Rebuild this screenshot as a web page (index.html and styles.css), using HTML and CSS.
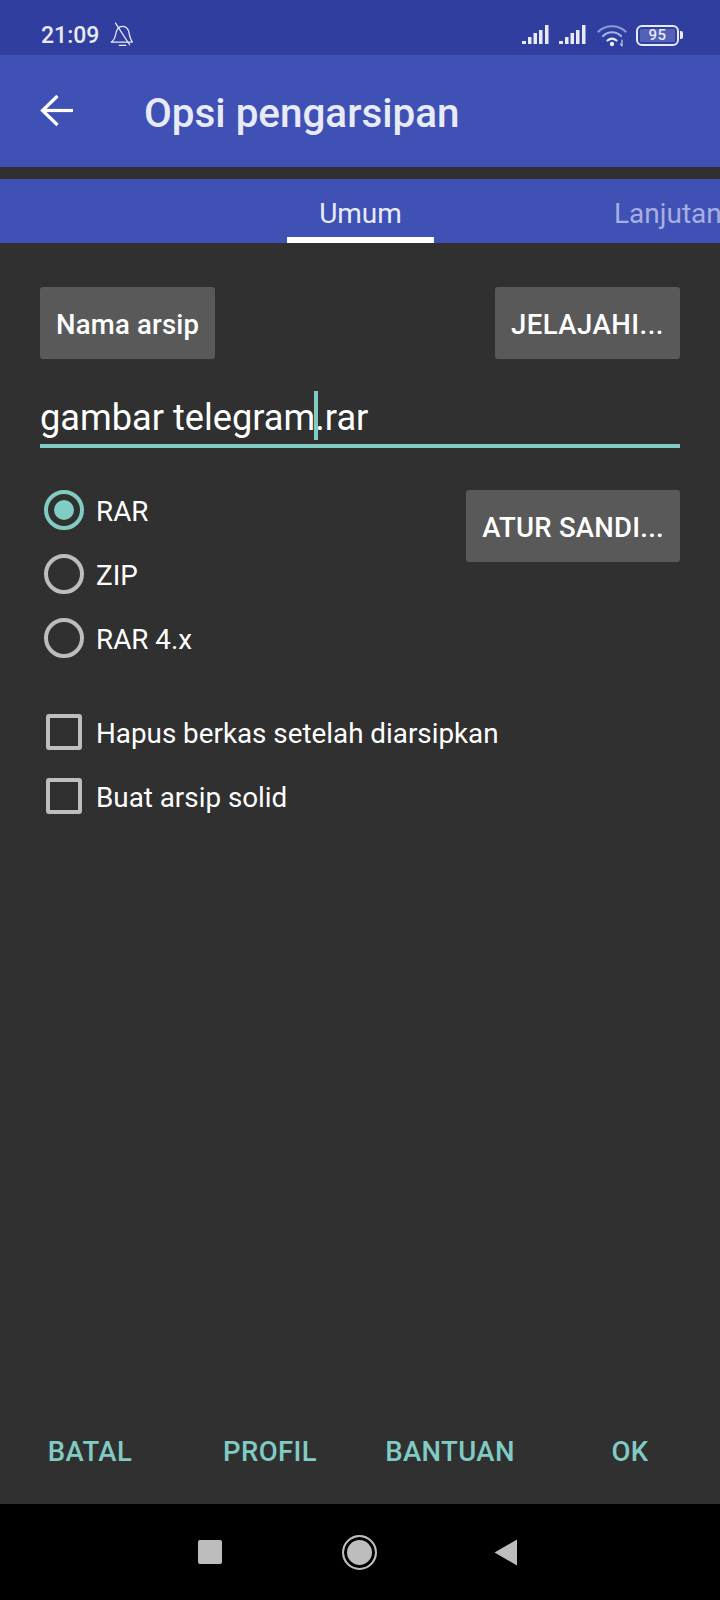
FILE: index.html
```html
<!DOCTYPE html>
<html lang="id">
<head>
<meta charset="utf-8">
<title>Opsi pengarsipan</title>
<link rel="stylesheet" href="styles.css">
</head>
<body>
<div class="screen">
  <div class="status">
    <span class="time">21:09</span>
    <svg class="bell" width="26" height="26" viewBox="0 0 24 24" fill="none" stroke="#e8eaf6" stroke-width="1.200" stroke-linejoin="round" stroke-linecap="round">
      <path d="M2 18.500c2.500-1.500 3.500-3.500 4-6.500.6-4 2.500-8 6.500-8 2.500 0 4.500 1.500 5.500 4 .8 2.500.6 6 3.500 10.500z"/>
      <path d="M9.500 21.500h6"/>
      <path d="M6 1l13 20"/>
    </svg>
    <span class="status-space"></span>
    <svg class="signal" width="28" height="22" viewBox="0 0 28 22" fill="#e8eaf6">
      <rect x="0" y="17" width="4" height="3"/><rect x="6" y="13" width="3.500" height="7"/><rect x="11.500" y="9" width="3.500" height="11"/><rect x="17" y="6" width="3.500" height="14"/><rect x="23" y="1" width="3.500" height="19"/>
    </svg>
    <svg class="signal" width="28" height="22" viewBox="0 0 28 22" fill="#e8eaf6">
      <rect x="0" y="17" width="4" height="3"/><rect x="6" y="13" width="3.500" height="7"/><rect x="11.500" y="9" width="3.500" height="11"/><rect x="17" y="6" width="3.500" height="14"/><rect x="23" y="1" width="3.500" height="19"/>
    </svg>
    <svg class="wifi" width="30" height="24" viewBox="0 0 30 24" fill="none" stroke-linecap="round">
      <path d="M1.500 8.500C9 1.500 21 1.500 28.500 8.500" stroke="#8f9ad6" stroke-width="2.200"/>
      <path d="M6 13c5.500-5 12.500-5 18 0" stroke="#a9b2e2" stroke-width="2.200"/>
      <path d="M10.500 17.500c3-2.500 6-2.500 9 0" stroke="#e8eaf6" stroke-width="2.200"/>
      <circle cx="15" cy="21" r="2.200" fill="#e8eaf6"/>
      <path d="M25 17v6M23.500 21l1.500 2" stroke="#c5cae9" stroke-width="1.200"/>
    </svg>
    <span class="battery"><span class="battery-level">95</span></span>
    <span class="battery-tip"></span>
  </div>

  <header class="toolbar">
    <svg class="back" width="34" height="34" viewBox="0 0 34 34" fill="none" stroke="#fff" stroke-width="3.200">
      <path d="M33 16.500H3"/><path d="M17.500 2L2.500 16.500 17.500 31"/>
    </svg>
    <h1 class="title">Opsi pengarsipan</h1>
  </header>

  <nav class="tabs">
    <div class="tab tab-active">Umum</div>
    <div class="tab tab-next">Lanjutan</div>
  </nav>

  <main class="content">
    <div class="row-between">
      <div class="btn btn-name">Nama arsip</div>
      <div class="btn btn-browse">JELAJAHI...</div>
    </div>
    <div class="field"><span class="field-text">gambar telegram<span class="caret"></span>.rar</span></div>

    <div class="format">
      <div class="radios">
        <div class="option"><span class="radio radio-on"></span><span class="label">RAR</span></div>
        <div class="option"><span class="radio"></span><span class="label">ZIP</span></div>
        <div class="option"><span class="radio"></span><span class="label">RAR 4.x</span></div>
      </div>
      <div class="btn btn-pass">ATUR SANDI...</div>
    </div>

    <div class="checks">
      <div class="option"><span class="check"></span><span class="label">Hapus berkas setelah diarsipkan</span></div>
      <div class="option"><span class="check"></span><span class="label">Buat arsip solid</span></div>
    </div>
  </main>

  <footer class="actions">
    <div class="action">BATAL</div>
    <div class="action">PROFIL</div>
    <div class="action">BANTUAN</div>
    <div class="action">OK</div>
  </footer>

  <div class="navbar">
    <span class="nav-square"></span>
    <span class="nav-home"></span>
    <svg class="nav-back" width="24" height="27" viewBox="0 0 24 27" fill="#bdbdbd"><path d="M23 .5V26.500L.5 13.500z"/></svg>
  </div>
</div>
</body>
</html>
```

FILE: styles.css
```css
* { box-sizing: border-box; }
html, body { margin: 0; padding: 0; }
body { background: #303030; font-family: Roboto, "Liberation Sans", sans-serif; }

.screen { width: 720px; height: 1600px; display: flex; flex-direction: column; overflow: hidden; background: #303030; color: #fff; }

.status { height: 55px; flex: none; background: #303f9f; display: flex; align-items: center; padding: 15px 0 0 41px; color: #e8eaf6; }
.time { font-size: 23px; font-weight: 500; }
.bell { margin-left: 10px; }
.status-space { flex: 1; }
.signal { margin-right: 9px; }
.wifi { margin-left: 1px; margin-right: 9px; }
.battery { width: 43px; height: 21px; border: 2.500px solid #e8eaf6; border-radius: 6px; padding: 2px; display: flex; }
.battery-level { flex: 1; background: #5361b8; color: #e8eaf6; font-size: 15px; font-weight: 500; line-height: 13px; text-align: center; border-radius: 1px; letter-spacing: .5px; }
.battery-tip { width: 3px; height: 8px; background: #e8eaf6; margin: 0 37px 0 1px; border-radius: 0 2px 2px 0; }

.toolbar { height: 112px; flex: none; background: #3f51b5; display: flex; align-items: center; padding: 0 0 0 40px; }
.back { flex: none; }
.title { margin: 4px 0 0 70px; font-size: 40.400px; font-weight: 500; color: #e8eaf6; }

.tabs { margin-top: 12px; height: 64px; flex: none; background: #3f51b5; display: flex; padding-left: 287px; overflow: hidden; }
.tab { flex: none; font-size: 28px; line-height: 70px; white-space: nowrap; }
.tab-active { width: 147px; height: 64px; text-align: center; color: #e8eaf6; border-bottom: 6px solid #fff; }
.tab-next { margin-left: 180px; color: #a6afe0; }

.content { flex: 1; padding: 44px 40px 0; display: flex; flex-direction: column; }
.row-between { display: flex; justify-content: space-between; }
.btn { height: 72px; padding: 0 16px; background: #595959; border-radius: 3px; font-size: 27.500px; font-weight: 500; line-height: 75px; white-space: nowrap; }
.btn-name { letter-spacing: .2px; }
.btn-browse { letter-spacing: .5px; }
.btn-pass { margin-top: 10px; letter-spacing: .25px; }

.field { margin-top: 25px; height: 64px; border-bottom: 4px solid #80cbc4; font-size: 36.200px; line-height: 68px; }
.field-text { position: relative; }
.caret { position: relative; display: inline-block; width: 0; height: 0; }
.caret::after { content: ""; position: absolute; left: -1px; bottom: -10px; width: 4px; height: 49px; background: #80cbc4; }

.format { margin-top: 32px; display: flex; justify-content: space-between; align-items: flex-start; }
.radios { display: flex; flex-direction: column; gap: 24px; margin-top: 10px; padding-left: 4px; }
.option { display: flex; align-items: center; gap: 12px; height: 40px; font-size: 27.800px; }
.label { padding-top: 2px; }
.radio { width: 40px; height: 40px; border-radius: 50%; border: 4px solid #bdbdbd; flex: none; }
.radio-on { border-color: #80cbc4; position: relative; }
.radio-on::after { content: ""; position: absolute; left: 6px; top: 6px; width: 20px; height: 20px; border-radius: 50%; background: #80cbc4; }

.checks { margin-top: 54px; padding-left: 6px; display: flex; flex-direction: column; gap: 24px; }
.check { width: 36px; height: 36px; border: 4px solid #bdbdbd; border-radius: 3px; flex: none; margin-right: 2px; }

.actions { height: 54px; margin-bottom: 25px; flex: none; display: grid; grid-template-columns: repeat(4, 1fr); }
.action { text-align: center; font-size: 27.500px; letter-spacing: .4px; font-weight: 500; line-height: 54px; color: #80cbc4; }

.navbar { height: 96px; flex: none; background: #000; display: flex; align-items: center; }
.nav-square { width: 24px; height: 24px; margin-left: 198px; background: #bdbdbd; border-radius: 2px; }
.nav-home { width: 35px; height: 35px; margin-left: 120px; border-radius: 50%; background: #bdbdbd; border: 2.500px solid #bdbdbd; box-shadow: inset 0 0 0 3px #000; }
.nav-back { margin-left: 117px; }
```
